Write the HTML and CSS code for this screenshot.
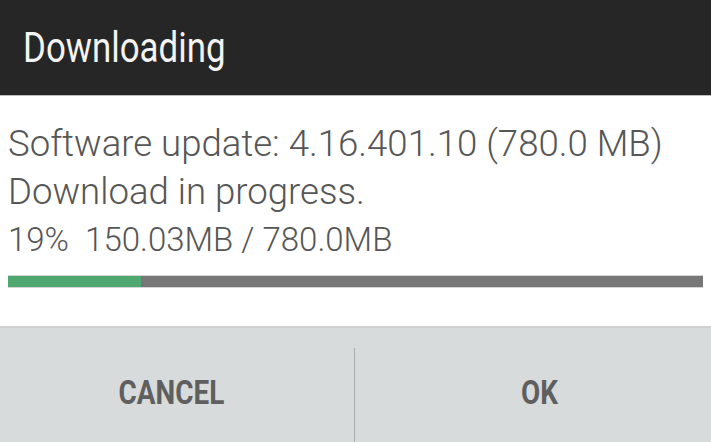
FILE: index.html
```html
<!DOCTYPE html>
<html>
<head>
<meta charset="utf-8">
<link rel="stylesheet" href="styles.css">
</head>
<body>
<div class="dialog">
  <header class="title-bar"><span class="title">Downloading</span></header>
  <section class="content">
    <div class="line big">Software update: 4.16.401.10 (780.0 MB)</div>
    <div class="line big second">Download in progress.</div>
    <div class="line small">19%&nbsp; 150.03MB / 780.0MB</div>
    <div class="progress"><div class="fill" style="width:19.2%"></div></div>
  </section>
  <footer class="buttons">
    <div class="btn btn-cancel"><span class="btn-label">CANCEL</span></div>
    <div class="divider"></div>
    <div class="btn btn-ok"><span class="btn-label">OK</span></div>
  </footer>
</div>
</body>
</html>
```
FILE: styles.css
```css
html, body {
  margin: 0;
  padding: 0;
  width: 711px;
  height: 442px;
  overflow: hidden;
  background: #ffffff;
}
.dialog {
  display: flex;
  flex-direction: column;
  height: 442px;
  font-family: Roboto, "Liberation Sans", sans-serif;
}
.title-bar {
  height: 96px;
  background: #262626;
  border-bottom: 1px solid #bdbdbd;
  display: flex;
  align-items: center;
  padding-left: 23px;
  box-sizing: border-box;
}
.title {
  display: inline-block;
  color: #f4f4f4;
  font-size: 42px;
  font-weight: 400;
  transform: scaleX(0.83);
  transform-origin: left center;
  white-space: nowrap;
}
.content {
  height: 230px;
  padding: 0 8px 0 8px;
  box-sizing: border-box;
  color: #565656;
  font-weight: 300;
}
.line { white-space: nowrap; }
.big {
  font-size: 36.6px;
  line-height: 48px;
}
.line.big:first-child { margin-top: 24px; }
.small {
  font-size: 33px;
  line-height: 40px;
  margin-top: 4px;
}
.progress {
  margin-top: 15px;
  height: 13px;
  width: 695px;
  background: #777777;
  border-top: 1px solid #d4d4d4;
  border-bottom: 1px solid #d4d4d4;
  box-sizing: border-box;
}
.fill {
  height: 100%;
  background: #4fa86f;
}
.buttons {
  flex: 1;
  display: flex;
  background: #d8dbdb;
  border-top: 2px solid #cfd1d1;
}
.btn {
  flex: 1;
  display: flex;
  align-items: center;
  justify-content: center;
  padding-top: 13px;
}
.btn-cancel { padding-right: 11px; }
.btn-ok { padding-left: 14px; }
.btn-label {
  display: inline-block;
  color: #5f5f5f;
  font-size: 34px;
  font-weight: 700;
  transform: scaleX(0.82);
}
.divider {
  width: 1px;
  background: #a9abab;
  margin-top: 20px;
}
```
